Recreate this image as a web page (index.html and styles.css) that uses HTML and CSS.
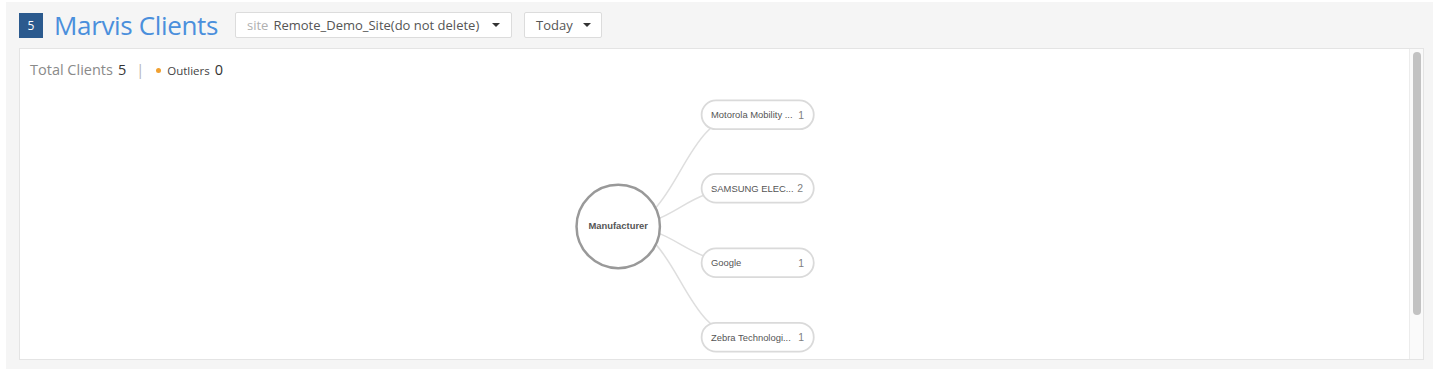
FILE: index.html
```html
<!DOCTYPE html>
<html>
<head>
<meta charset="utf-8">
<link rel="stylesheet" href="styles.css">
</head>
<body>
<div class="panel">
  <div class="header">
    <span class="badge">5</span>
    <h1 class="title">Marvis Clients</h1>
    <div class="dropdown site">
      <span class="label">site</span>
      <span class="value">Remote_Demo_Site(do not delete)</span>
      <span class="caret"></span>
    </div>
    <div class="dropdown period">
      <span class="value">Today</span>
      <span class="caret"></span>
    </div>
  </div>
  <div class="card">
    <div class="content">
      <div class="stats">
        <span class="muted">Total Clients</span>
        <span class="num">5</span>
        <span class="sep">|</span>
        <span class="dot"></span>
        <span class="small">Outliers</span>
        <span class="num">0</span>
      </div>
      <svg class="graph" width="1390" height="270" viewBox="20 90 1390 270">
        <g class="links">
          <path d="M617 226 C 680 226, 680 114, 745 114"/>
          <path d="M617 226 C 680 226, 680 188, 745 188"/>
          <path d="M617 226 C 680 226, 680 263, 745 263"/>
          <path d="M617 226 C 680 226, 680 338, 745 338"/>
        </g>
        <circle class="root" cx="617.5" cy="226.5" r="42"/>
        <text class="root-label" x="617.5" y="229.5">Manufacturer</text>
        <g class="leaf">
          <rect x="701.5" y="99.5" width="113" height="29" rx="14.5"/>
          <text class="name" x="711" y="117.5">Motorola Mobility ...</text>
          <text class="count" x="799" y="118">1</text>
        </g>
        <g class="leaf">
          <rect x="701.5" y="173.5" width="113" height="29" rx="14.5"/>
          <text class="name" x="711" y="191.5">SAMSUNG ELEC...</text>
          <text class="count" x="798" y="192">2</text>
        </g>
        <g class="leaf">
          <rect x="701.5" y="248.5" width="113" height="29" rx="14.5"/>
          <text class="name" x="711" y="266.5">Google</text>
          <text class="count" x="799" y="267">1</text>
        </g>
        <g class="leaf">
          <rect x="701.5" y="323.5" width="113" height="29" rx="14.5"/>
          <text class="name" x="711" y="341.5">Zebra Technologi...</text>
          <text class="count" x="799" y="342">1</text>
        </g>
      </svg>
    </div>
    <div class="scrolltrack"><div class="thumb"></div></div>
  </div>
</div>
</body>
</html>
```
FILE: styles.css
```css
html, body {
  margin: 0;
  padding: 0;
  background: #ffffff;
  font-family: "Open Sans", "Liberation Sans", sans-serif;
}
.panel {
  margin: 2px 8px 0 6px;
  height: 367px;
  box-sizing: border-box;
  background: #f5f5f5;
  padding: 10px 9px 9px 13px;
  display: flex;
  flex-direction: column;
  gap: 10px;
}
.header {
  display: flex;
  align-items: center;
  height: 26px;
}
.badge {
  width: 24px;
  height: 25px;
  background: #2b5a8e;
  color: #fff;
  font-size: 12px;
  display: flex;
  align-items: center;
  justify-content: center;
}
.title {
  margin: 0 0 0 11px;
  font-weight: 400;
  font-size: 26px;
  line-height: 26px;
  color: #4a8fdc;
  letter-spacing: -0.35px;
}
.dropdown {
  height: 26px;
  box-sizing: border-box;
  background: #fff;
  border: 1px solid #dcdcdc;
  border-radius: 2px;
  display: flex;
  align-items: center;
  font-size: 13px;
  color: #555;
}
.site {
  margin-left: 17px;
  width: 277px;
  padding: 0 11px 0 11px;
}
.period {
  margin-left: 12px;
  width: 78px;
  padding: 0 10px 0 11px;
}
.label {
  color: #b0b0b0;
  margin-right: 5px;
}
.caret {
  margin-left: auto;
  width: 0;
  height: 0;
  border-left: 4px solid transparent;
  border-right: 4px solid transparent;
  border-top: 4px solid #333;
}
.card {
  flex: 1;
  background: #fff;
  border: 1px solid #e4e4e4;
  display: flex;
  min-height: 0;
}
.content {
  flex: 1;
  display: flex;
  flex-direction: column;
  overflow: hidden;
}
.stats {
  display: flex;
  align-items: baseline;
  padding: 11px 0 0 10px;
  height: 30px;
  box-sizing: border-box;
  font-size: 14.5px;
}
.muted { color: #8a8a8a; }
.num { color: #333; margin-left: 5px; }
.sep { color: #b5b5b5; margin: 0 11px 0 10px; }
.dot {
  width: 5px;
  height: 5px;
  border-radius: 50%;
  background: #f0a030;
  align-self: center;
  margin: 2px 6px 0 1px;
}
.small { font-size: 11.5px; color: #444; }
.graph {
  display: block;
  margin-top: 12px;
}
.links path {
  fill: none;
  stroke: #dedede;
  stroke-width: 1.5;
}
.root {
  fill: #fff;
  stroke: #999;
  stroke-width: 2.5;
}
.root-label {
  font-family: "Liberation Sans", Arial, sans-serif;
  font-size: 9.5px;
  font-weight: 700;
  fill: #555;
  text-anchor: middle;
}
.leaf rect {
  fill: #fff;
  stroke: #dadada;
  stroke-width: 1.8;
}
.leaf text {
  font-family: "Liberation Sans", Arial, sans-serif;
  font-size: 9.5px;
  fill: #555;
}
.leaf .count { fill: #808080; font-size: 10.5px; }
.scrolltrack {
  width: 13px;
  border-left: 1px solid #ececec;
  background: #fafafa;
  display: flex;
  justify-content: center;
  padding-top: 3px;
}
.thumb {
  width: 8px;
  height: 263px;
  border-radius: 4px;
  background: #c2c2c2;
}
```
